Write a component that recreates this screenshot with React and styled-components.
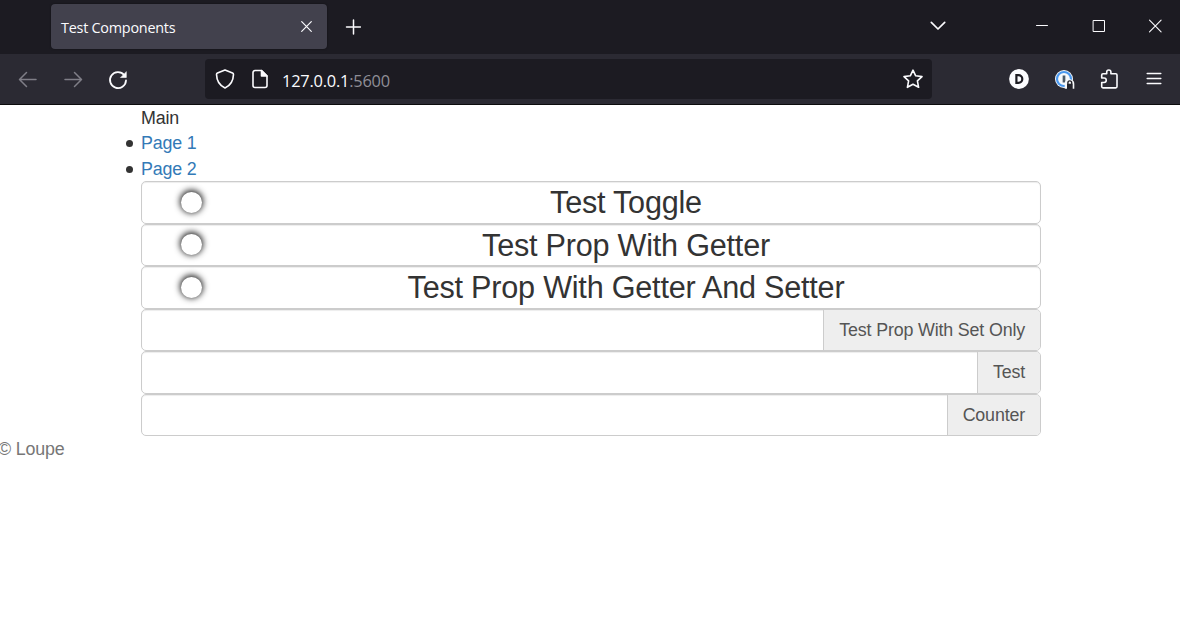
import React from "react";
import styled, { createGlobalStyle } from "styled-components";

const Global = createGlobalStyle`
  * { box-sizing: border-box; }
  body {
    margin: 0;
    background: #fff;
    color: #333;
    font: 17.85px/25.4px "Liberation Sans", Arial, sans-serif;
    letter-spacing: -0.16px;
    overflow: hidden;
  }
`;

const TabBar = styled.div`
  height: 54px;
  background: #1c1b22;
  display: flex;
  align-items: flex-start;
  padding: 4px 16px 0 51px;
`;

const Tab = styled.div`
  flex: none;
  width: 276px;
  height: 45px;
  border-radius: 4px;
  background: #42414d;
  box-shadow: 0 0 2px rgba(0, 0, 0, 0.5);
  display: flex;
  align-items: center;
  justify-content: space-between;
  padding: 0 14px 0 10px;
`;

const TabTitle = styled.span`
  font: 14.4px/20px "Open Sans", "Noto Sans", sans-serif;
  letter-spacing: -0.24px;
  color: #fbfbfe;
  white-space: nowrap;
  padding-top: 2px;
`;

const Icon = styled.svg`
  display: block;
  flex: none;
  width: ${(p) => p.$w || 20}px;
  height: ${(p) => p.$w || 20}px;
  margin-left: ${(p) => p.$ml || 0}px;
  margin-top: ${(p) => p.$mt || 0}px;
  fill: none;
  stroke: ${(p) => p.$color || "#fbfbfe"};
  stroke-width: ${(p) => p.$sw || 1.5};
  stroke-linecap: round;
  stroke-linejoin: round;
`;

const NavBar = styled.div`
  height: 51px;
  background: #2b2a33;
  border-bottom: 1px solid #0c0c0d;
  display: flex;
  align-items: center;
  padding: 0 16px 0 18px;
`;

const UrlBar = styled.div`
  flex: none;
  width: 727px;
  height: 40px;
  margin-left: 77px;
  border-radius: 4px;
  background: #1c1b22;
  display: flex;
  align-items: center;
  padding: 0 9px 0 10px;
`;

const Url = styled.span`
  flex: 1;
  margin-left: 12px;
  padding-top: 3px;
  font: 16.4px/22px "Open Sans", "Noto Sans", sans-serif;
  letter-spacing: -0.22px;
  color: #fbfbfe;
`;

const Port = styled.span`
  color: #8f8e96;
`;

const Content = styled.main`
  width: 900px;
  margin-left: 141px;
`;

const Menu = styled.ul`
  height: 76.2px;
  margin: 0;
  padding: 1px 0 0;
  list-style: none;
`;

const MenuItem = styled.li`
  display: flex;
  align-items: center;

  &::before {
    content: "";
    width: 7px;
    height: 7px;
    margin: 0 8px 1px -15px;
    border-radius: 50%;
    background: #333;
  }
`;

const Link = styled.a`
  color: #337ab7;
  text-decoration: none;
`;

const Row = styled.div`
  height: 42.5px;
  border: 1px solid #ccc;
  border-radius: 5px;
  box-shadow: inset 0 1px 1px rgba(0, 0, 0, 0.075);
  display: flex;
  align-items: stretch;
  overflow: hidden;
`;

const KnobCell = styled.div`
  width: 99px;
  display: flex;
  align-items: center;
  justify-content: center;
`;

const Knob = styled.div`
  width: 21px;
  height: 21px;
  border-radius: 50%;
  background: #fff;
  box-shadow: 0 -1px 6px 1px rgba(0, 0, 0, 0.85);
`;

const ToggleLabel = styled.div`
  width: 770px;
  text-align: center;
  font-size: 30.6px;
  letter-spacing: -0.22px;
  line-height: 40.4px;
`;

const Field = styled.div`
  flex: 1;
`;

const Addon = styled.div`
  padding: 0 15px;
  border-left: 1px solid #ccc;
  background: #eee;
  color: #555;
  line-height: 40px;
  white-space: nowrap;
`;

const Footer = styled.footer`
  margin-left: -2px;
  padding-top: 1px;
  color: #777;
`;

const toggles = ["Test Toggle", "Test Prop With Getter", "Test Prop With Getter And Setter"];
const fields = ["Test Prop With Set Only", "Test", "Counter"];

export default function App() {
  return (
    <>
      <Global />
      <TabBar>
        <Tab>
          <TabTitle>Test Components</TabTitle>
          <Icon $w={13} viewBox="0 0 13 13" $sw={1.2}><path d="M1.7 1.7l9.6 9.6M11.3 1.7l-9.6 9.6" /></Icon>
        </Tab>
        <Icon $w={16} $ml={18} $mt={15} viewBox="0 0 16 16"><path d="M8.5 1v14M1.5 8h14" /></Icon>
        <Icon $w={16} $ml={569} $mt={14} viewBox="0 0 16 16" $sw={1.7}><path d="M1.3 4.3L8 11l6.7-6.7" /></Icon>
        <Icon $w={14} $ml={89} $mt={14} viewBox="0 0 14 14" $sw={1}><path d="M1.5 7.5h11" /></Icon>
        <Icon $w={14} $ml={43} $mt={15} viewBox="0 0 14 14" $sw={1}><path d="M1.5 1.5h11v11h-11z" /></Icon>
        <Icon $w={14} $ml={42} $mt={15} viewBox="0 0 14 14" $sw={1.1}><path d="M1.5 1.2l11.6 11.6M13.1 1.2L1.500 12.8" /></Icon>
      </TabBar>
      <NavBar>
        <Icon viewBox="0 0 20 20" $color="#7f7e87"><path d="M18 10.5H2M8.5 3.5l-7 7 7 7" /></Icon>
        <Icon $ml={25} viewBox="0 0 20 20" $color="#7f7e87"><path d="M2 10.5h16M11.5 3.5l7 7-7 7" /></Icon>
        <Icon $ml={25} $mt={1} viewBox="0 0 20 20" $sw={1.8}>
          <path d="M16.2 5A8 8 0 1 0 18 10.5" />
          <path d="M18.3 2v5.5h-5.5z" fill="#fbfbfe" strokeWidth="0.6" />
        </Icon>
        <UrlBar>
          <Icon viewBox="0 0 20 20" $sw={1.6}>
            <path d="M10 .9L17.5 4c.7.3 1 .7 1 1.4C18.3 11.7 15.5 16.5 10 19 4.5 16.5 1.7 11.7 1.5 5.4c0-.7.3-1.1 1-1.4z" />
          </Icon>
          <Icon $ml={15} viewBox="0 0 20 20" $sw={1.6}>
            <path d="M11.5 1.5H5a2 2 0 0 0-2 2v13a2 2 0 0 0 2 2h10a2 2 0 0 0 2-2V7z" />
            <path d="M11.5 1.5V7H17z" fill="#fbfbfe" />
          </Icon>
          <Url>127.0.0.1<Port>:5600</Port></Url>
          <Icon viewBox="0 0 20 20" $sw={1.6}>
            <path d="M10 1.1l2.7 5.7 6.3.8-4.6 4.3 1.2 6.4L10 15.3l-5.6 3 1.2-6.4L1 7.6l6.3-.8z" />
          </Icon>
        </UrlBar>
        <Icon $ml={77} viewBox="0 0 20 20">
          <circle cx="10" cy="10" r="9.9" fill="#fbfbfe" stroke="none" />
          <path d="M7.4 6.1h2a3.9 3.9 0 0 1 0 7.8h-2z" stroke="#1c1b22" strokeWidth="2.2" strokeLinejoin="miter" />
        </Icon>
        <Icon $ml={26} viewBox="0 0 20 20">
          <circle cx="9" cy="10" r="9" fill="#f7f9fb" stroke="none" />
          <circle cx="9" cy="10" r="7" stroke="#4a98ee" strokeWidth="2.2" />
          <path d="M9 6.5v7" stroke="#4b5a68" strokeWidth="2.7" strokeLinecap="butt" />
          <path d="M9.7 19.8v-5c0-6 9.6-6 9.6 0v5z" fill="#f7f9fb" stroke="none" />
          <path d="M12.9 14.5v-.7a1.9 1.9 0 0 1 3.8 0v.7" stroke="#24232b" strokeWidth="1.4" />
          <path d="M12 14.7h5.7v5.3H12z" fill="#24232b" stroke="none" />
        </Icon>
        <Icon $ml={25} viewBox="0 0 20 20" $sw={1.6}>
          <path d="M1.7 9V6.1c0-.8.5-1.3 1.3-1.3h3.7V3.1a2 2 0 0 1 4.2 0v1.7h4.8c.8 0 1.3.5 1.3 1.3v11.5c0 .8-.5 1.3-1.3 1.3H3c-.8 0-1.3-.5-1.3-1.3v-4.1H4a2.25 2.25 0 0 0 0-4.5z" />
        </Icon>
        <Icon $w={18} $ml={25} viewBox="0 0 18 18"><path d="M2.2 3.5h13.6M2.2 8.5h13.6M2.2 13.5h13.6" /></Icon>
      </NavBar>
      <Content>
        <Menu>
          <li>Main</li>
          <MenuItem><Link href="#1">Page 1</Link></MenuItem>
          <MenuItem><Link href="#2">Page 2</Link></MenuItem>
        </Menu>
        {toggles.map((t) => (
          <Row key={t}>
            <KnobCell><Knob /></KnobCell>
            <ToggleLabel>{t}</ToggleLabel>
          </Row>
        ))}
        {fields.map((t) => (
          <Row key={t}>
            <Field />
            <Addon>{t}</Addon>
          </Row>
        ))}
      </Content>
      <Footer>© Loupe</Footer>
    </>
  );
}
